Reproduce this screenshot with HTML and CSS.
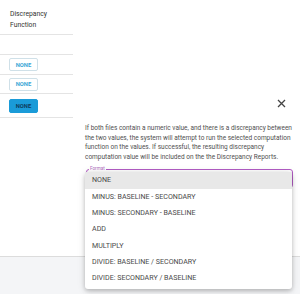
FILE: index.html
```
<!DOCTYPE html>
<html lang="en">
<head>
    <meta charset="UTF-8">
    <meta name="viewport" content="width=device-width, initial-scale=1.0">
    <title>Discrepancy Function</title>
    <link rel="stylesheet" href="styles.css">
</head>
<body>
    <div class="page">
        <div class="main">
            <div class="fn-table">
                <div class="fn-head">Discrepancy<br>Function</div>
                <div class="fn-row fn-filter"></div>
                <div class="fn-row"><button class="btn-none">NONE</button></div>
                <div class="fn-row fn-short"><button class="btn-none">NONE</button></div>
                <div class="fn-row fn-tall"><button class="btn-none active">NONE</button></div>
            </div>
            <div class="dialog">
                <div class="dialog-head">
                    <button class="close-btn" aria-label="close">
                        <svg width="9" height="9" viewBox="0 0 9 9"><path d="M1 1L8 8M8 1L1 8" stroke="#444" stroke-width="1.3" fill="none"/></svg>
                    </button>
                </div>
                <p class="dialog-text">If both files contain a numeric value, and there is a discrepancy between the two values, the system will attempt to run the selected computation function on the values. If successful, the resulting discrepancy computation value will be included on the the Discrepancy Reports.</p>
                <div class="format-field">
                    <fieldset class="outline"><legend>Format</legend></fieldset>
                    <ul class="menu">
                        <li class="menu-item hover">NONE</li>
                        <li class="menu-item">MINUS: BASELINE - SECONDARY</li>
                        <li class="menu-item">MINUS: SECONDARY - BASELINE</li>
                        <li class="menu-item">ADD</li>
                        <li class="menu-item">MULTIPLY</li>
                        <li class="menu-item">DIVIDE: BASELINE / SECONDARY</li>
                        <li class="menu-item">DIVIDE: SECONDARY / BASELINE</li>
                    </ul>
                </div>
            </div>
        </div>
        <div class="footer"></div>
    </div>
</body>
</html>
```

FILE: styles.css
```
*{
    margin: 0;
    padding: 0;
    box-sizing: border-box;
}
body{
    font-family: Roboto, "Liberation Sans", sans-serif;
    background: #fff;
    width: 300px;
    height: 294px;
    overflow: hidden;
}
.page{
    display: flex;
    flex-direction: column;
    height: 294px;
}
.main{
    height: 257px;
    display: flex;
    border-bottom: 1px solid #dcdcdc;
}
.footer{
    flex: 1;
    background: #f4f5f7;
}
.fn-table{
    width: 73px;
}
.fn-head{
    height: 35px;
    padding: 9px 0 0 10px;
    font-size: 6.8px;
    line-height: 11px;
    color: #333;
    border-bottom: 1px solid #e4e4e4;
}
.fn-row{
    height: 20px;
    padding-left: 9px;
    display: flex;
    align-items: center;
    border-bottom: 1px solid #e4e4e4;
}
.fn-short{
    height: 19px;
}
.fn-tall{
    height: 24px;
}
.btn-none{
    width: 29px;
    height: 13px;
    font-family: inherit;
    font-size: 5.8px;
    font-weight: 700;
    color: #3aa6d6;
    background: #fff;
    border: 1px solid #cfe0e8;
    border-radius: 2px;
}
.btn-none.active{
    height: 14px;
    background: #1a9bd8;
    border-color: #1a9bd8;
    color: #0d3c5e;
}
.dialog{
    flex: 1;
    position: relative;
    padding: 96px 7px 0 12px;
}
.dialog-head{
    display: flex;
    justify-content: flex-end;
    padding-right: 5px;
}
.close-btn{
    width: 14px;
    height: 14px;
    border: none;
    background: none;
    display: flex;
    align-items: center;
    justify-content: center;
}
.dialog-text{
    margin-top: 14px;
    font-size: 6.5px;
    line-height: 9.6px;
    color: #505050;
}
.format-field{
    position: relative;
    margin-top: 6px;
    margin-left: 1px;
    height: 20px;
}
.outline{
    border: 1px solid #b25cc4;
    border-radius: 3px;
    height: 20px;
    padding: 0 2px;
}
.outline legend{
    font-size: 4.6px;
    color: #b070c0;
    padding: 0 1px;
    line-height: 2px;
}
.menu{
    position: absolute;
    top: 4px;
    left: -1px;
    width: 207px;
    list-style: none;
    background: #fff;
    border-radius: 3px;
    padding-bottom: 3px;
    box-shadow: 0 2px 4px rgba(0,0,0,.2), 0 1px 8px rgba(0,0,0,.12);
}
.menu-item{
    height: 16.3px;
    line-height: 16.3px;
    padding-left: 7px;
    font-size: 7.1px;
    color: #4a4a4a;
}
.menu-item.hover{
    background: #e8e8e8;
}
```
